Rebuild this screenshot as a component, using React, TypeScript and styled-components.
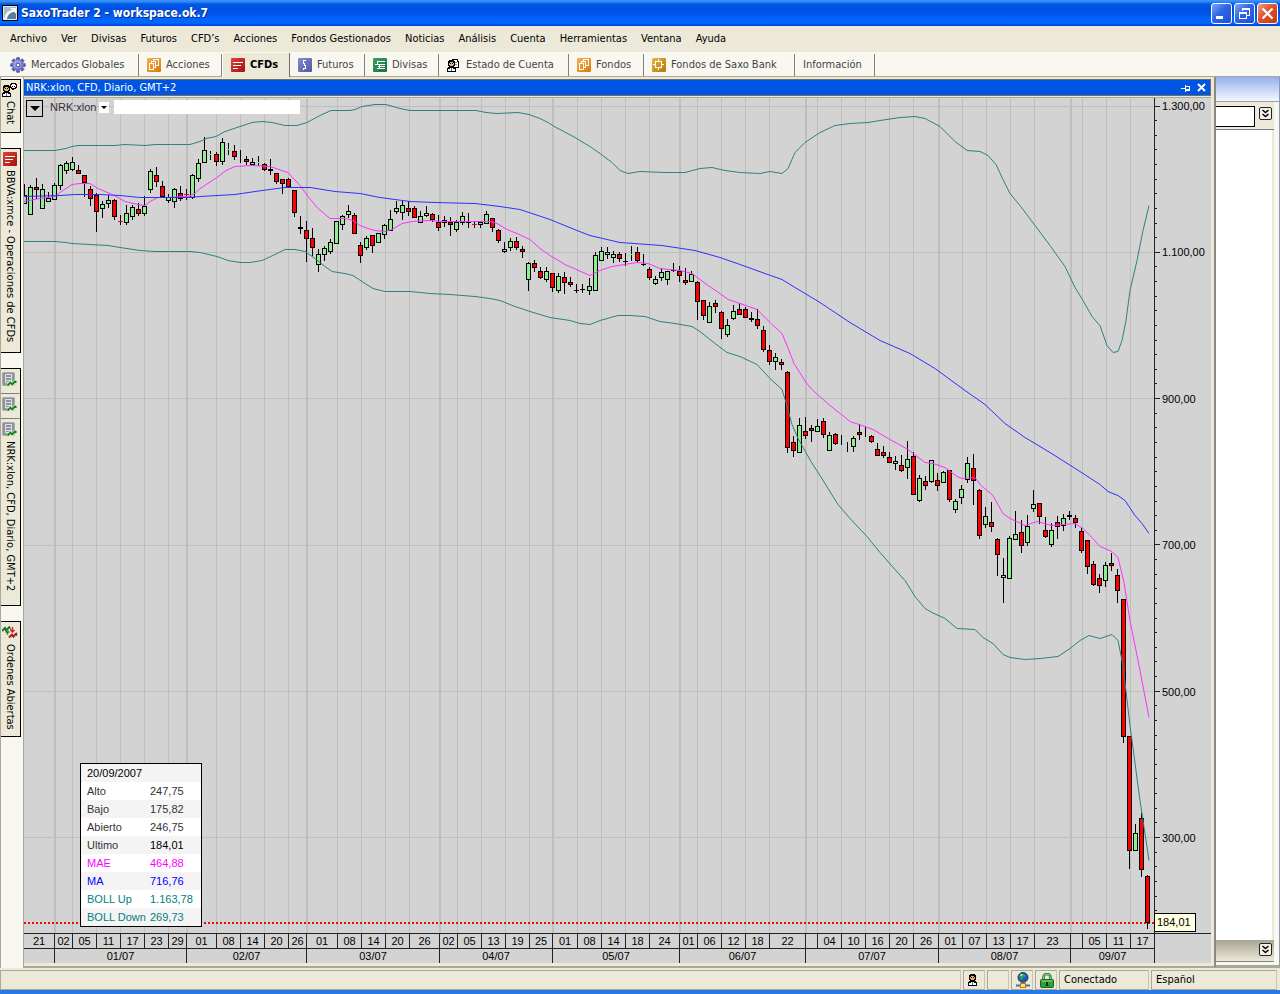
import React from "react";
import styled, { createGlobalStyle, css } from "styled-components";

const UI_FONT = `"DejaVu Sans Condensed", "DejaVu Sans", "Noto Sans", sans-serif`;
const DATA_FONT = `"Liberation Sans", Arial, sans-serif`;

const GlobalStyle = createGlobalStyle`
  *, *::before, *::after { box-sizing: border-box; }
  body { margin: 0; background: #ece9d8; font: 11px/14px ${UI_FONT}; color: #000; }
  button, input, select { font: inherit; color: inherit; margin: 0; padding: 0; border-radius: 0; }
  svg { display: block; }
`;

/* ---------- Window frame ---------- */

const Page = styled.div`
  display: flex;
  flex-direction: column;
  height: 100vh;
  min-height: 480px;
  overflow: hidden;
`;

const TitleBar = styled.header`
  display: flex;
  flex: none;
  align-items: center;
  height: 26px;
  padding: 0 2px;
  background: linear-gradient(#3d95ff 0, #2a85f5 2px, #0058e6 4px, #0050e0 9px, #0058ee 15px, #0068ff 20px, #0066fc 23px, #003fd8 26px);
`;

const Title = styled.h1`
  flex: 1;
  margin: 0 0 0 3px;
  font: bold 12px/16px ${UI_FONT};
  color: #fff;
  text-shadow: 1px 1px 0 #0a2a8c;
  white-space: nowrap;
`;

const WindowButton = styled.button<{ $danger?: boolean }>`
  display: grid;
  place-items: center;
  width: 21px;
  height: 21px;
  margin-left: 2px;
  border: 1px solid #fff;
  border-radius: 3px;
  background: ${(p) =>
    p.$danger
      ? "linear-gradient(135deg, #f0a088, #e0502c 45%, #c83c10)"
      : "linear-gradient(135deg, #7fa4f5, #2e66e6 45%, #1c50d8)"};
`;

const MenuBar = styled.nav`
  display: flex;
  flex: none;
  align-items: center;
  gap: 14px;
  height: 26px;
  padding: 0 0 1px 10px;
  background: #ece9d8;
`;

const MenuItem = styled.button`
  border: 0;
  background: none;
  white-space: nowrap;
`;

const TabBar = styled.nav`
  display: flex;
  flex: none;
  height: 25px;
  border-bottom: 1px solid #aca899;
  background: #f8f7f0;
`;

const Tab = styled.button<{ $width: number; $active?: boolean }>`
  display: flex;
  align-items: center;
  gap: 5px;
  width: ${(p) => p.$width}px;
  height: 22px;
  margin-top: 2px;
  padding: 0 0 1px 10px;
  border: 0;
  border-right: 1px solid #808080;
  background: none;
  color: #444;
  white-space: nowrap;
  ${(p) =>
    p.$active &&
    css`
      height: 24px;
      margin: 1px 0 0 0;
      padding: 0 0 0 8px;
      border-left: 1px solid #fff;
      border-right-color: #716f64;
      background: #ece9d8;
      color: #000;
      font-weight: bold;
      & + & {
        padding-left: 8px;
      }
    `}
`;

const Workspace = styled.main`
  display: flex;
  flex: 1;
  min-height: 0;
`;

/* ---------- Docked tabs on the left ---------- */

const Dock = styled.aside`
  display: flex;
  flex: none;
  flex-direction: column;
  gap: 15px;
  width: 23px;
  padding-top: 2px;
  border-left: 1px solid #aca899;
  background: #f8f7f0;
`;

const DockGroup = styled.div`
  display: flex;
  flex-direction: column;
  width: 20px;
  border: 1px solid #000;
  border-left: 0;
  background: #ece9d8;
`;

const DockTab = styled.button<{ $height: number }>`
  display: flex;
  align-items: center;
  gap: 4px;
  width: 19px;
  height: ${(p) => p.$height}px;
  padding: 3px 2px 0 0;
  border: 0;
  background: none;
  writing-mode: vertical-rl;
  white-space: nowrap;
  & + & {
    border-top: 1px solid #808080;
  }
`;

/* ---------- Chart panel ---------- */

const Panel = styled.section`
  display: flex;
  flex: 1;
  flex-direction: column;
  min-width: 0;
  padding: 2px 3px 3px 0;
  border-right: 2px solid #8c8a80;
  border-left: 1px solid #aca899;
  border-bottom: 2px solid #aca899;
`;

const PanelTitle = styled.header`
  display: flex;
  flex: none;
  align-items: center;
  justify-content: space-between;
  height: 17px;
  padding: 0 4px 0 2px;
  border: 1px solid #716f64;
  border-left: 0;
  background: #0054e3;
  color: #fff;
`;

const PanelName = styled.h2`
  margin: 0;
  font: 11px/14px ${UI_FONT};
`;

const PanelTools = styled.div`
  display: flex;
  gap: 6px;
`;

const IconButton = styled.button`
  display: grid;
  place-items: center;
  border: 0;
  background: none;
`;

const Chart = styled.div`
  display: grid;
  flex: 1;
  grid-template-columns: minmax(0, 1fr) 57px;
  grid-template-rows: minmax(0, 1fr) 30px;
  min-height: 0;
  margin-top: 1px;
  border-top: 1px solid #aca899;
  background: #d3d3d3;
  font: 11px/14px ${DATA_FONT};
`;

const Plot = styled.div`
  display: grid;
  grid-template: minmax(0, 1fr) / minmax(0, 1fr);
  min-height: 0;
  & > * {
    grid-area: 1 / 1;
  }
`;

const Drawing = styled.svg`
  width: 100%;
  height: 100%;
`;

const SymbolBar = styled.div`
  display: flex;
  align-items: center;
  align-self: start;
  height: 18px;
  margin-left: 2px;
  color: #333;
`;

const MenuArrow = styled.button`
  display: grid;
  place-items: center;
  width: 17px;
  height: 17px;
  margin: 3px 7px 0 0;
  border: 1px solid #000;
  background: #d3d3d3;
`;

const SymbolLabel = styled.label`
  width: 49px;
  font: 11px/14px ${DATA_FONT};
`;

const SymbolSelect = styled.div`
  display: grid;
  place-items: center;
  width: 10px;
  height: 11px;
  margin-right: 5px;
  background: #fff;
  & > * {
    grid-area: 1 / 1;
  }
  svg {
    pointer-events: none;
  }
  select {
    width: 10px;
    height: 11px;
    border: 0;
    appearance: none;
    background: #fff;
    color: transparent;
  }
`;

const SymbolInput = styled.input`
  width: 186px;
  height: 14px;
  border: 0;
  background: #fff;
`;

const Readout = styled.table`
  align-self: end;
  width: 122px;
  margin: 0 0 6px 56px;
  border: 1px solid #000;
  border-collapse: separate;
  border-spacing: 0;
  background: #fff;
  table-layout: fixed;
`;

const ReadoutRow = styled.tr<{ $color?: string }>`
  height: 18px;
  color: ${(p) => p.$color ?? "#333"};
  &:nth-child(odd) {
    background: #f4f4f4;
  }
  th,
  td {
    padding: 0;
    font-weight: normal;
    text-align: left;
    white-space: nowrap;
  }
  th {
    width: 69px;
    padding-left: 6px;
  }
`;

const ReadoutValue = styled.td<{ $strong?: boolean }>`
  color: ${(p) => (p.$strong ? "#000" : "inherit")};
`;

const PriceAxis = styled.div`
  display: grid;
  position: relative;
  grid-template: minmax(0, 1fr) / 7px 1fr;
`;

const PriceLabels = styled.div`
  display: flex;
  flex-direction: column;
  justify-content: space-between;
  padding: 1px 0 88px 1px;
`;

const LastPrice = styled.output`
  position: absolute;
  bottom: 1px;
  left: 0;
  width: 42px;
  height: 19px;
  padding-left: 2px;
  border: 1px solid #000;
  background: #ffffe1;
  line-height: 17px;
`;

const TimeAxis = styled.div`
  display: flex;
  flex-direction: column;
`;

const AxisRow = styled.div`
  display: flex;
  height: 15px;
  border-top: 1px solid #222;
`;

const AxisCell = styled.div<{ $span: number }>`
  display: flex;
  flex: ${(p) => `${p.$span} ${p.$span} ${p.$span}px`};
  justify-content: center;
  min-width: 0;
  border-right: 1px solid #222;
  white-space: nowrap;
  &:last-child {
    border-right: 0;
  }
`;

const AxisCorner = styled.div`
  border-top: 1px solid #222;
  border-left: 1px solid #222;
`;

/* ---------- Window behind, on the right ---------- */

const BackWindow = styled.aside`
  display: flex;
  flex: none;
  flex-direction: column;
  width: 64px;
  padding: 0 5px 3px 0;
  border-right: 1px solid #8d9cb5;
  border-bottom: 3px solid #aca899;
  background: #f8f7f0;
`;

const BackTitle = styled.div`
  height: 25px;
  margin-right: -5px;
  border-bottom: 1px solid #9aa0a8;
  background: linear-gradient(#94b2f0, #f4f8ff);
`;

const BackToolbar = styled.div<{ $bottom?: boolean }>`
  display: flex;
  flex: none;
  align-items: ${(p) => (p.$bottom ? "center" : "flex-start")};
  justify-content: ${(p) => (p.$bottom ? "flex-end" : "flex-start")};
  gap: 4px;
  height: ${(p) => (p.$bottom ? 22 : 28)}px;
  padding: ${(p) => (p.$bottom ? "0 2px 4px 0" : "4px 0 0 0")};
  border-bottom: 1px solid #808080;
  background: ${(p) => (p.$bottom ? "linear-gradient(#a8a494, #ece9d8)" : "#ece9d8")};
`;

const BackInput = styled.input`
  width: 39px;
  height: 21px;
  border: 1px solid #000;
  border-left: 0;
  background: #fff;
`;

const BackBody = styled.div`
  flex: 1;
  border-right: 2px solid #ece9d8;
  background: #fff;
`;

const ExpandButton = styled.button`
  display: grid;
  flex: none;
  place-items: center;
  width: 13px;
  height: 13px;
  margin-top: 1px;
  border: 1px solid #222;
  border-radius: 2px;
  background: #f4f2e8;
`;

/* ---------- Status bar ---------- */

const StatusBar = styled.footer`
  display: flex;
  flex: none;
  gap: 2px;
  height: 26px;
  padding: 2px 3px 0 0;
  border-bottom: 4px solid #2a78e4;
  background: #ece9d8;
`;

const StatusPane = styled.div<{ $width?: number }>`
  display: flex;
  flex: ${(p) => (p.$width ? "none" : "1")};
  align-items: center;
  width: ${(p) => (p.$width ? `${p.$width}px` : "auto")};
  height: 20px;
  padding-left: 4px;
  border: 1px solid #aca899;
  border-right-color: #c8c4b4;
`;

/* ---------- Icons ---------- */

const GearIcon = () => (
  <svg width="16" height="16" viewBox="0 0 16 16">
    <g fill="#5a5cb0" stroke="#3c3e8c" strokeWidth=".5">
      {[0, 45, 90, 135].map((a) => (
        <rect key={a} x="6.4" y=".6" width="3.2" height="14.8" rx=".6" transform={`rotate(${a} 8 8)`} />
      ))}
    </g>
    <circle cx="8" cy="8" r="5.8" fill="#7075c8" />
    <circle cx="7.4" cy="7.2" r="4" fill="#9aa2e4" />
    <circle cx="8" cy="8" r="1.9" fill="#f8f7f0" stroke="#44479a" />
  </svg>
);

const Tile = ({ from, to, children }: { from: string; to: string; children: React.ReactNode }) => (
  <svg width="14" height="14" viewBox="0 0 14 14">
    <defs>
      <linearGradient id={`t${from.slice(1)}`} x1="0" y1="0" x2="1" y2="1">
        <stop offset="0" stopColor={from} />
        <stop offset="1" stopColor={to} />
      </linearGradient>
    </defs>
    <rect width="14" height="14" rx="1" fill={`url(#t${from.slice(1)})`} />
    <g fill="none" stroke="#fff" shapeRendering="crispEdges">
      {children}
    </g>
  </svg>
);

const StocksIcon = () => (
  <Tile from="#f8b050" to="#d87808">
    <path d="M2.500 5.500h4v6h-4zM4.500 5V3.500h4v6H7M6.500 3V1.500h5v6H9" />
  </Tile>
);
const CfdIcon = () => (
  <Tile from="#e04038" to="#a01410">
    <path d="M2 4.500h10M2 7.500h8M2 10.500h5" />
  </Tile>
);
const FuturesIcon = () => (
  <Tile from="#8490cc" to="#5058a0">
    <path d="M7.500 2.500h-2v3h1v2h1v3h-2v1" />
  </Tile>
);
const ForexIcon = () => (
  <Tile from="#40a068" to="#107040">
    <path d="M4 3.500h8M4 10.500h8M2 6.500h10M5 8.500h7M4.500 4v3M6.500 6v5" />
  </Tile>
);
const FundsIcon = () => (
  <Tile from="#e8b840" to="#b07808">
    <path d="M3.500 3.500h6v6h-6zM6.500 1v2M6.500 10v2M1 6.500h2M10 6.500h2" />
  </Tile>
);

const PersonShape = () => (
  <g shapeRendering="crispEdges">
    <path fill="#000" d="M2 0h5v1h1v5h-1v1h1v1h1v4H0V8h1V7h1V6H1V1h1z" />
    <path fill="#e8b870" d="M3 2h3v1h1v2H6v1H3V5H2V3h1z" />
    <path fill="#000" d="M3 3h1v1H3zM5 3h1v1H5z" />
    <path fill="#fff" d="M1 9h2V8h3v1h2v2H1z" />
    <path fill="#5868e0" d="M4 8h1v3H4z" />
  </g>
);

const PersonIcon = () => (
  <svg width="9" height="12" viewBox="0 0 9 12">
    <PersonShape />
  </svg>
);

const AccountIcon = () => (
  <svg width="14" height="14" viewBox="0 0 14 14">
    <path d="M5.500 1.500h5v2h1v6h-6z" fill="#fff" stroke="#000" shapeRendering="crispEdges" />
    <path d="M7 4.500h3M7 6.500h3" stroke="#888" />
    <g transform="translate(0 2)">
      <PersonShape />
    </g>
  </svg>
);

const ChatIcon = () => (
  <svg width="15" height="14" viewBox="0 0 15 14">
    <path d="M8.500 1.500h1v-1h4v1h1v3h-1v1h-2v1h-1v-1h-1v-1h-1z" fill="#fff" stroke="#000" shapeRendering="crispEdges" />
    <path d="M10 3h1v1h-1zM12 3h1v1h-1z" />
    <g transform="translate(0 2)">
      <PersonShape />
    </g>
  </svg>
);

const ChartDocIcon = () => (
  <svg width="15" height="15" viewBox="0 0 15 15">
    <rect x=".5" y=".5" width="12" height="13" rx="1" fill="#8c939c" stroke="#a8adb4" />
    <path d="M3.500 2.500h6v8h-6zM4 5.500h5M4 8.500h5" fill="none" stroke="#dcdfe2" shapeRendering="crispEdges" />
    <path d="M5.500 13.500l3-3 1.500 2 3-3 1.500 1" fill="none" stroke="#ece9d8" strokeWidth="3.200" />
    <path d="M5.500 13.500l3-3 1.500 2 3-3 1.500 1" fill="none" stroke="#108018" strokeWidth="1.800" />
  </svg>
);

const OrdersIcon = () => (
  <svg width="16" height="15" viewBox="0 0 16 15" fill="none">
    <path d="M0 6l3-3 1.500 2L8 1.500" stroke="#187818" strokeWidth="2" />
    <path d="M7 12.500l3-3 1.500 2L15 8" stroke="#c01818" strokeWidth="2" />
    <path d="M5.500 10V5.500M3.500 7.500l2-2 2 2" stroke="#40a040" strokeWidth="1.500" />
    <path d="M10.500 2v5M8.500 5l2 2 2-2" stroke="#e02020" strokeWidth="1.500" />
    <path d="M2 4l4 4M7 2l2 3M9 10l3 3M13 8l2 3" stroke="#444" />
  </svg>
);

const NetworkIcon = () => (
  <svg width="14" height="16" viewBox="0 0 14 16">
    <circle cx="7" cy="5.500" r="5" fill="#1c58c0" stroke="#183878" />
    <path d="M4 2.500l3-1 3 1.500-1 2-2 .5-1 3-2-2-1-2z" fill="#38a038" />
    <path d="M5 2l2 .5-1 1.500-2-.5z" fill="#c8f0e8" />
    <path d="M0 13.500h14M7 10v2" stroke="#4870a0" strokeWidth="2" />
    <rect x="4.500" y="11.500" width="5" height="4" fill="#ffe060" stroke="#c07800" />
  </svg>
);

const LockIcon = () => (
  <svg width="14" height="15" viewBox="0 0 14 15">
    <path d="M3.500 7V4.500a3.500 3.500 0 017 0V7" fill="none" stroke="#207828" strokeWidth="2.600" />
    <path d="M3.500 7V4.500a3.500 3.500 0 017 0V7" fill="none" stroke="#98d898" />
    <rect x=".5" y="6.500" width="13" height="8" rx="1" fill="#30a038" stroke="#186820" />
    <path d="M1.500 8h11" stroke="#90d890" />
    <path d="M6 9h2v2l.5 2h-3l.5-2z" fill="#083808" />
  </svg>
);

const LogoIcon = () => (
  <svg width="16" height="16" viewBox="0 0 16 16">
    <rect x=".5" y=".5" width="15" height="15" fill="#7c9cb8" stroke="#000" />
    <path d="M2 2h12L2 11z" fill="#a4bccc" />
    <path d="M2 14c1-5 3-8 8-9L8 3h6v6l-2-2c-4 0-6 3-7 7z" fill="#f4f8fa" />
    <path d="M5 14c1-4 3-6 7-7l2 2v5z" fill="#5c7c9c" />
    <rect x="1.500" y="1.500" width="13" height="13" fill="none" stroke="#dfe8f0" />
  </svg>
);

const DoubleChevron = () => (
  <svg width="9" height="9" viewBox="0 0 9 9" fill="none" stroke="#000" strokeWidth="1.500">
    <path d="M1.500 1l3 2.500L7.500 1M1.500 5l3 2.500L7.500 5" />
  </svg>
);

/* ---------- Chart data ---------- */

/* kind, high, body top, body bottom, low.
   g / r: rising and falling bodies; k, G, R: flat sessions; l: range only */
type Candle = [string, number, number, number, number];

const CANDLES: Candle[] = (
  "g184,195,204,204 g185,187,215,215 r178,187,190,199 g184,189,209,209 g192,198,202,202 g183,185,200,200 g164,165,186,190 " +
  "g161,163,171,174 g157,162,170,171 r165,170,174,174 r175,175,183,197 r186,189,199,206 r193,195,212,232 g201,204,209,218 " +
  "g195,200,204,208 r199,200,217,220 R215,221,222,225 g205,213,223,225 g205,207,217,220 r203,209,214,216 g196,206,214,216 " +
  "g169,171,190,193 r167,175,182,187 r181,186,197,198 g194,197,201,203 g188,189,202,208 r186,193,199,201 R189,194,195,200 " +
  "g174,175,198,199 g159,163,179,182 g137,150,163,163 G151,154,155,160 r152,154,162,166 g138,142,162,165 G143,149,150,155 " +
  "r145,151,157,160 l150,150,163,163 r156,159,162,165 g158,162,165,165 G156,162,163,166 r163,164,170,171 k159,169,171,175 " +
  "r173,173,182,184 r179,179,184,194 r178,179,187,187 r190,190,213,217 k216,227,229,234 r221,230,239,262 r228,238,248,256 " +
  "g249,254,265,272 g246,248,255,261 g239,242,252,254 g221,221,244,244 g215,216,225,230 g205,211,215,218 r213,215,234,234 " +
  "r242,245,256,263 g236,238,248,250 r235,235,246,253 g233,233,243,243 g224,225,235,239 g210,219,231,231 g201,208,212,214 " +
  "g200,205,213,220 r201,208,212,216 r206,208,218,218 g211,216,223,223 g206,213,216,217 r213,214,220,222 r215,222,228,231 " +
  "g216,220,223,227 r217,222,225,236 g220,222,230,232 g212,216,223,225 k213,222,223,228 R221,224,225,228 g222,222,225,228 " +
  "g211,214,224,224 r218,218,228,232 r229,230,241,243 g242,249,252,253 g238,241,248,251 r237,241,248,250 r246,249,252,258 " +
  "g262,263,280,291 r260,263,268,272 r267,271,278,279 g267,271,280,282 r273,273,288,292 g273,276,291,293 r272,277,283,294 " +
  "r277,282,285,287 k284,290,291,293 k284,289,290,293 g278,286,291,295 g252,255,291,291 g247,251,261,261 g247,252,255,259 " +
  "g251,254,258,263 r252,254,259,262 k253,261,262,266 G246,254,255,261 r247,252,261,263 k254,264,265,266 r267,269,278,280 " +
  "g276,279,284,285 g268,272,278,281 g271,271,280,285 k263,270,271,272 r266,271,276,282 r268,280,283,285 g271,274,282,282 " +
  "r281,282,302,320 r300,300,316,320 g302,306,323,323 r300,303,307,313 r311,312,329,339 g319,325,335,337 g305,311,319,320 " +
  "r303,309,315,315 r307,309,318,318 k312,318,320,322 r309,319,326,329 r326,330,350,352 r345,350,362,365 g353,357,362,370 " +
  "r359,362,365,370 r371,372,448,453 r436,442,451,457 g418,425,453,453 r417,431,436,439 r425,428,431,442 g419,426,432,432 " +
  "r418,421,435,438 g432,435,451,451 r433,434,444,445 l435,435,445,445 l442,442,452,452 g436,438,447,452 r424,432,435,440 " +
  "l427,427,437,437 r435,436,442,443 r443,449,456,456 r446,452,456,458 r452,457,463,463 g456,461,464,470 r455,465,471,472 " +
  "g441,459,468,479 r452,456,495,495 g475,478,501,502 r476,481,486,490 g460,460,482,483 r473,480,486,491 g471,472,483,483 " +
  "r470,470,500,502 g499,501,510,513 g485,489,498,504 g457,463,480,483 r454,468,481,505 r489,490,536,539 g507,516,525,528 " +
  "r502,522,527,532 r538,539,555,576 g558,575,578,603 g536,538,579,579 g511,534,540,540 r520,532,546,553 g515,526,543,546 " +
  "g490,504,509,512 r503,503,517,524 r517,530,537,538 g523,530,545,547 r516,522,527,539 g514,518,526,531 k511,515,517,520 " +
  "r515,518,523,528 r528,531,551,553 r540,540,567,574 r561,564,585,586 r574,578,586,593 g562,565,581,587 r553,563,566,571 " +
  "r569,575,591,603 r599,599,737,743 r736,736,851,869 g824,833,851,851 r813,818,870,877 r875,876,923,929"
)
  .split(" ")
  .map((s) => [s[0], ...s.slice(1).split(",").map(Number)] as Candle);

const BOLL_UP =
  "24,150 55,150 60,149 66,148 72,146 78,145 115,145 125,144 145,145 155,144 190,144 200,141 206,138 216,136 225,131 240,126 252,122 262,121 272,122 285,125 297,125 307,122 320,115 331,110 350,110 355,109 362,106 375,104 386,104 400,108 410,110 476,110 486,112 497,113 518,112 529,114 540,118 548,122 556,127 562,130 575,137 590,146 600,153 612,162 620,170 628,173 640,171 665,172 685,172 700,168 712,167 725,170 740,172 760,173 770,171 782,173 788,168 795,152 805,142 820,132 835,125 850,123 868,122 880,120 900,117 915,116 925,118 940,126 955,141 967,150 980,151 988,155 996,164 1003,179 1010,193 1020,205 1035,225 1050,245 1065,266 1075,287 1083,300 1092,316 1100,325 1107,345 1113,352 1118,351 1122,340 1126,320 1130,290 1137,260 1143,230 1149,205";
const BOLL_DOWN =
  "24,241 55,241 66,242 72,243 90,244 108,245 120,247 140,250 155,251 190,251 200,252 217,256 228,260 240,262 250,262 262,260 275,254 285,249 295,249 305,251 315,258 325,266 332,271 345,273 353,275 362,281 373,288 385,291 410,291 430,293 450,294 475,296 490,298 500,300 515,306 530,311 540,314 550,317 570,320 580,323 590,324 600,320 618,315 630,315 645,316 660,321 675,323 692,326 700,331 715,343 727,352 740,356 757,364 770,378 782,389 786,402 792,424 798,438 811,461 820,475 838,504 850,518 867,536 880,552 895,569 905,580 915,596 925,608 932,612 945,618 957,628 975,629 983,637 993,643 1003,654 1010,657 1025,659 1040,658 1058,656 1070,648 1080,640 1089,635 1100,638 1112,634 1118,640 1123,665 1130,725 1140,800 1149,860";
const MAE =
  "24,201 40,198 55,196 60,192 72,184 80,183 90,183 98,188 110,193 118,197 125,201 138,204 145,205 150,201 158,197 165,197 188,196 195,193 200,188 217,177 226,170 235,166 252,165 270,166 288,172 300,185 308,196 318,208 330,218 345,218 353,220 360,225 368,228 375,230 385,231 392,229 402,223 412,221 430,220 440,221 490,221 497,223 507,229 517,233 530,239 540,248 550,255 565,264 590,275 600,270 612,266 637,262 648,263 660,268 680,270 692,273 700,279 708,285 717,291 728,299 740,303 757,309 772,324 782,333 787,345 794,363 806,382 813,390 830,405 850,421 862,425 873,429 890,439 908,449 925,462 933,463 945,467 957,476 962,478 975,477 981,485 993,495 1003,513 1010,518 1025,525 1037,521 1052,525 1075,523 1083,528 1090,535 1100,546 1112,551 1118,557 1124,582 1130,620 1140,670 1149,717";
const MA =
  "24,196 60,195 75,194 100,194 120,195 140,197 190,197 200,196 235,194 262,190 285,187 310,187 335,191 360,193 380,197 410,201 435,202 475,203 500,206 520,209 550,219 577,230 590,235 620,242 662,245 695,250 720,257 740,264 765,273 782,279 795,287 820,302 850,322 880,340 910,353 935,368 965,390 985,404 1005,423 1025,437 1050,452 1080,471 1100,484 1108,491 1118,495 1125,500 1135,515 1142,523 1149,533";

/* label and right edge of every cell on the time axis */
const DAYS: [string, number][] = [
  ["21", 54], ["02", 72], ["05", 96], ["11", 120], ["17", 144], ["23", 168], ["29", 186],
  ["01", 216], ["08", 240], ["14", 264], ["20", 288], ["26", 306],
  ["01", 337], ["08", 361], ["14", 385], ["20", 409], ["26", 439],
  ["02", 457], ["05", 481], ["13", 505], ["19", 529], ["25", 552],
  ["01", 577], ["08", 601], ["14", 625], ["18", 649], ["24", 679],
  ["01", 697], ["06", 721], ["12", 745], ["18", 769], ["22", 805],
  ["", 817], ["04", 841], ["10", 865], ["16", 889], ["20", 913], ["26", 938],
  ["01", 962], ["07", 986], ["13", 1010], ["17", 1034], ["23", 1070],
  ["", 1082], ["05", 1106], ["11", 1130], ["17", 1154],
];
const MONTHS: [string, number][] = [
  ["", 54], ["01/07", 186], ["02/07", 306], ["03/07", 439], ["04/07", 552],
  ["05/07", 679], ["06/07", 805], ["07/07", 938], ["08/07", 1070], ["09/07", 1154],
];
const LEFT = 24;
const TOP = 98;
const GRID_Y = [106, 252, 398, 545, 691, 837];
const MONTH_EDGES = new Set(MONTHS.map((m) => m[1]));

const Axis = ({ cells }: { cells: [string, number][] }) => (
  <AxisRow>
    {cells.map(([label, edge], i) => (
      <AxisCell key={edge} $span={edge - (i ? cells[i - 1][1] : LEFT - 1) + (i === cells.length - 1 ? -1 : 0)}>
        {label}
      </AxisCell>
    ))}
  </AxisRow>
);

const CandleShape = ({ candle, x }: { candle: Candle; x: number }) => {
  const [kind, high, top, bottom, low] = candle;
  const flat = { k: "#000", G: "#90ee90", R: "#f00" }[kind];
  return (
    <g>
      <rect x={x} y={high} width={1} height={low - high} fill="#000" />
      {flat && <rect x={x - 2} y={top} width={5} height={bottom - top} fill={flat} />}
      {(kind === "g" || kind === "r") && (
        <>
          <rect x={x - 2} y={top} width={5} height={bottom - top} fill="#000" />
          <rect x={x - 1} y={top + 1} width={3} height={bottom - top - 2} fill={kind === "g" ? "#90ee90" : "#f00"} />
        </>
      )}
    </g>
  );
};

const ChartDrawing = () => (
  <Drawing viewBox={`${LEFT} ${TOP} 1130 835`} preserveAspectRatio="none" role="img" aria-label="NRK:xlon">
    <g fill="#bebebe" shapeRendering="crispEdges">
      {DAYS.slice(0, -1).map(([, edge]) => (
        <rect key={edge} x={edge} y={TOP} width={MONTH_EDGES.has(edge) ? 2 : 1} height={835} />
      ))}
      {GRID_Y.map((y) => (
        <rect key={y} x={LEFT} y={y} width={1130} height={1} />
      ))}
    </g>
    <path d="M24 923H1154" stroke="#f00" strokeWidth="2" strokeDasharray="2 2" shapeRendering="crispEdges" />
    <g shapeRendering="crispEdges">
      {CANDLES.map((c, i) => (
        <CandleShape key={i} candle={c} x={24 + i * 6 + (i > 93 ? 1 : 0)} />
      ))}
    </g>
    <g fill="none" transform="translate(0 .5)">
      <polyline points={BOLL_UP} stroke="#2f8080" />
      <polyline points={BOLL_DOWN} stroke="#2f8080" />
      <polyline points={MAE} stroke="#ff30ff" />
      <polyline points={MA} stroke="#3030ff" />
    </g>
  </Drawing>
);

const READOUT: { name: string; value: string; color?: string; strong?: boolean }[] = [
  { name: "Alto", value: "247,75" },
  { name: "Bajo", value: "175,82" },
  { name: "Abierto", value: "246,75" },
  { name: "Ultimo", value: "184,01", strong: true },
  { name: "MAE", value: "464,88", color: "#f0f" },
  { name: "MA", value: "716,76", color: "#00f" },
  { name: "BOLL Up", value: "1.163,78", color: "#008080" },
  { name: "BOLL Down", value: "269,73", color: "#008080" },
];

const MENU = [
  "Archivo", "Ver", "Divisas", "Futuros", "CFD’s", "Acciones", "Fondos Gestionados",
  "Noticias", "Análisis", "Cuenta", "Herramientas", "Ventana", "Ayuda",
];

const TABS: { label: string; width: number; icon?: React.ReactNode; active?: boolean }[] = [
  { label: "Mercados Globales", width: 139, icon: <GearIcon /> },
  { label: "Acciones", width: 83, icon: <StocksIcon /> },
  { label: "CFDs", width: 68, icon: <CfdIcon />, active: true },
  { label: "Futuros", width: 75, icon: <FuturesIcon /> },
  { label: "Divisas", width: 74, icon: <ForexIcon /> },
  { label: "Estado de Cuenta", width: 130, icon: <AccountIcon /> },
  { label: "Fondos", width: 75, icon: <StocksIcon /> },
  { label: "Fondos de Saxo Bank", width: 151, icon: <FundsIcon /> },
  { label: "Información", width: 80 },
];

export default function App() {
  return (
    <Page>
      <GlobalStyle />
      <TitleBar>
        <LogoIcon />
        <Title>SaxoTrader 2 - workspace.ok.7</Title>
        <WindowButton aria-label="Minimizar">
          <svg width="13" height="13"><path d="M1 9h7v3H1z" fill="#fff" /></svg>
        </WindowButton>
        <WindowButton aria-label="Restaurar">
          <svg width="13" height="13" fill="#fff" shapeRendering="crispEdges">
            <path fillRule="evenodd" d="M4 1h8v8H9V8h2V3H5v1H4zM1 5h8v7H1zM2 7v4h6V7z" />
          </svg>
        </WindowButton>
        <WindowButton $danger aria-label="Cerrar">
          <svg width="13" height="13" stroke="#fff" strokeWidth="2.200"><path d="M1.500 1.500l10 10M11.500 1.500l-10 10" /></svg>
        </WindowButton>
      </TitleBar>
      <MenuBar>
        {MENU.map((m) => (
          <MenuItem key={m}>{m}</MenuItem>
        ))}
      </MenuBar>
      <TabBar>
        {TABS.map((t) => (
          <Tab key={t.label} $width={t.width} $active={t.active}>
            {t.icon}
            {t.label}
          </Tab>
        ))}
      </TabBar>
      <Workspace>
        <Dock>
          <DockGroup>
            <DockTab $height={52}><ChatIcon />Chat</DockTab>
          </DockGroup>
          <DockGroup>
            <DockTab $height={203}><CfdIcon />BBVA:xmce - Operaciones de CFDs</DockTab>
          </DockGroup>
          <DockGroup>
            <DockTab $height={24} aria-label="Gráfico 1"><ChartDocIcon /></DockTab>
            <DockTab $height={25} aria-label="Gráfico 2"><ChartDocIcon /></DockTab>
            <DockTab $height={187}><ChartDocIcon />NRK:xlon, CFD, Diario, GMT+2</DockTab>
          </DockGroup>
          <DockGroup>
            <DockTab $height={114}><OrdersIcon />Ordenes Abiertas</DockTab>
          </DockGroup>
        </Dock>
        <Panel>
          <PanelTitle>
            <PanelName>NRK:xlon, CFD, Diario, GMT+2</PanelName>
            <PanelTools>
              <IconButton aria-label="Fijar">
                <svg width="10" height="9" fill="none" stroke="#fff" shapeRendering="crispEdges">
                  <path d="M0 5.500h4M4.500 2v7M4 3.500h4.500v4H4M4 6.500h5" />
                </svg>
              </IconButton>
              <IconButton aria-label="Cerrar panel">
                <svg width="9" height="9" stroke="#fff" strokeWidth="2"><path d="M1 1l7 7M8 1L1 8" /></svg>
              </IconButton>
            </PanelTools>
          </PanelTitle>
          <Chart>
            <Plot>
              <ChartDrawing />
              <SymbolBar>
                <MenuArrow aria-label="Menú del gráfico">
                  <svg width="10" height="5"><path d="M0 0h10L5 5z" /></svg>
                </MenuArrow>
                <SymbolLabel htmlFor="symbol">NRK:xlon</SymbolLabel>
                <SymbolSelect>
                  <select id="symbol"><option>NRK:xlon</option></select>
                  <svg width="6" height="3"><path d="M0 0h6L3 3z" /></svg>
                </SymbolSelect>
                <SymbolInput aria-label="Nombre del instrumento" />
              </SymbolBar>
              <Readout>
                <tbody>
                  <ReadoutRow $color="#000">
                    <th>20/09/2007</th>
                    <td />
                  </ReadoutRow>
                  {READOUT.map((r) => (
                    <ReadoutRow key={r.name} $color={r.color}>
                      <th scope="row">{r.name}</th>
                      <ReadoutValue $strong={r.strong}>{r.value}</ReadoutValue>
                    </ReadoutRow>
                  ))}
                </tbody>
              </Readout>
            </Plot>
            <PriceAxis>
              <Drawing viewBox={`0 ${TOP} 7 835`} preserveAspectRatio="none" shapeRendering="crispEdges">
                <g fill="#222">
                  <rect y={TOP} width={1} height={835} />
                  {Array.from({ length: 56 }, (_, k) => (
                    <rect key={k} y={Math.floor(106 + k * 14.63)} width={k % 10 ? 3 : 6} height={1} />
                  ))}
                </g>
              </Drawing>
              <PriceLabels>
                {["1.300,00", "1.100,00", "900,00", "700,00", "500,00", "300,00"].map((p) => (
                  <span key={p}>{p}</span>
                ))}
              </PriceLabels>
              <LastPrice>184,01</LastPrice>
            </PriceAxis>
            <TimeAxis>
              <Axis cells={DAYS} />
              <Axis cells={MONTHS} />
            </TimeAxis>
            <AxisCorner />
          </Chart>
        </Panel>
        <BackWindow>
          <BackTitle />
          <BackToolbar>
            <BackInput aria-label="Buscar" />
            <ExpandButton aria-label="Desplegar"><DoubleChevron /></ExpandButton>
          </BackToolbar>
          <BackBody />
          <BackToolbar $bottom>
            <ExpandButton aria-label="Desplegar panel"><DoubleChevron /></ExpandButton>
          </BackToolbar>
        </BackWindow>
      </Workspace>
      <StatusBar>
        <StatusPane />
        <StatusPane $width={22}><PersonIcon /></StatusPane>
        <StatusPane $width={22} />
        <StatusPane $width={22}><NetworkIcon /></StatusPane>
        <StatusPane $width={22}><LockIcon /></StatusPane>
        <StatusPane $width={90}>Conectado</StatusPane>
        <StatusPane $width={126}>Español</StatusPane>
      </StatusBar>
    </Page>
  );
}
